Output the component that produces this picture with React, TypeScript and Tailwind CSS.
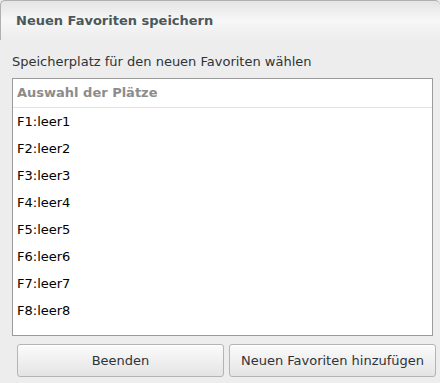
export default function App() {
  const slots = ["F1:leer1", "F2:leer2", "F3:leer3", "F4:leer4", "F5:leer5", "F6:leer6", "F7:leer7", "F8:leer8"];

  return (
    <div className="w-[440px] h-[383px] overflow-hidden bg-[#ededed] text-[13px] text-[#2e3436] [font-family:'DejaVu_Sans',sans-serif]">
      <div className="flex h-[40px] items-center rounded-t-[5px] border-t border-l border-[#b0b0b0] bg-gradient-to-b from-[#e4e4e4] via-[#f7f7f7] to-[#ededed] px-[15px]">
        <span className="font-bold text-[#4b585b]">Neuen Favoriten speichern</span>
      </div>

      <div className="px-[12px] pt-[13px]">
        <p className="leading-[18px]">Speicherplatz für den neuen Favoriten wählen</p>

        <div className="mt-[7px] h-[258px] w-[421px] border border-[#9b9b9b] bg-white">
          <div className="flex h-[29px] items-center border-b border-[#e3e3e3] px-[4px] font-bold text-[#8c8c8c]">
            Auswahl der Plätze
          </div>
          {slots.map((slot) => (
            <div key={slot} className="flex h-[27px] items-center px-[4px] text-black">
              {slot}
            </div>
          ))}
        </div>
      </div>

      <div className="mt-[8px] flex gap-[5px] pl-[17px]">
        <button
          type="button"
          className="h-[33px] w-[207px] rounded-[3px] border border-[#b4b4b4] bg-gradient-to-b from-[#fbfbfb] to-[#e4e4e4] text-[#2e3436] shadow-[inset_0_1px_0_#ffffff]"
        >
          Beenden
        </button>
        <button
          type="button"
          className="h-[33px] w-[207px] rounded-[3px] border border-[#b4b4b4] bg-gradient-to-b from-[#fbfbfb] to-[#e4e4e4] text-[#2e3436] shadow-[inset_0_1px_0_#ffffff]"
        >
          Neuen Favoriten hinzufügen
        </button>
      </div>
    </div>
  );
}
